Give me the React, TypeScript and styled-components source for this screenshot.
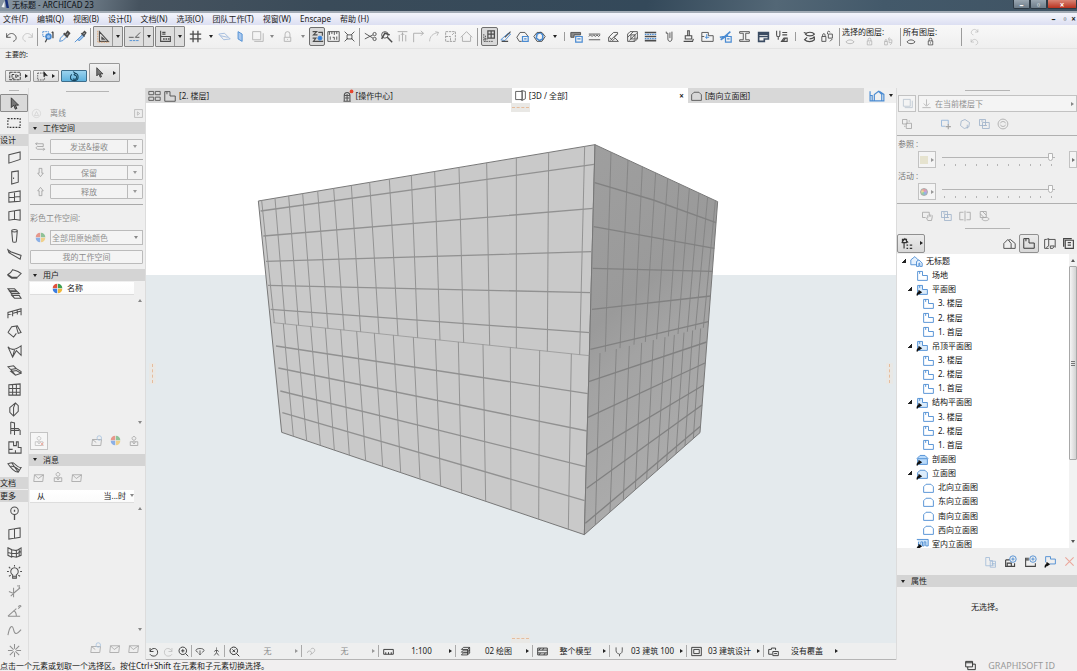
import React from "react";
import styled, { createGlobalStyle, css } from "styled-components";

const GlobalStyle = createGlobalStyle`
  *, *::before, *::after { box-sizing: border-box; }
  html, body { margin: 0; background: #efefef; }
  body, button, input, select {
    font-family: "Noto Sans", "Noto Sans CJK SC", sans-serif;
    font-size: 8px;
    line-height: 12px;
    color: #1c1c1c;
  }
  button { padding: 0; margin: 0; border: 0; background: none; }
  ul { list-style: none; margin: 0; padding: 0; }
`;

/* ---------- icons ---------- */

const B = "#4a8bd2";

const floor = <path d="M2 3h6v5h6v6H2z M4.500 3v3" />;
const house = <path d="M2 14V7l3-3h6l3 3v7z" />;
const linkMark = <path d="M1.500 15.500c0-3 1-4 3.500-4M3 9.500l3 2-3 2" stroke="#111" strokeWidth="1.800" />;
const disc = (
  <g strokeWidth="0">
    <path d="M7.500 7.500H1A6.500 6.500 0 0 1 7.500 1z" fill="#e0523c" />
    <path d="M8.500 7.500H15A6.500 6.500 0 0 0 8.500 1z" fill="#3f9e52" />
    <path d="M7.500 8.500H1A6.500 6.500 0 0 0 7.500 15z" fill="#3b7de0" />
    <path d="M8.500 8.500H15A6.500 6.500 0 0 1 8.500 15z" fill="#f0b73a" />
  </g>
);
const mail = <path d="M2 5h12l-1 9H1z M2 5l5 5 7-5" />;
const person = <path d="M8 2a2.500 2.500 0 1 1-.1 0z M3 14V9h10v5z M6 9l2 3 2-3" />;
const lock = <path d="M4 7h8v7H4z M5.500 7V4.500a2.500 2.500 0 0 1 5 0V7 M8 9.500v2" />;
const eye = <path d="M1.500 8c3-4.500 10-4.500 13 0-3 3.500-10 3.500-13 0z" />;

const icons: Record<string, React.ReactNode> = {
  undo: <path d="M2 4v5h5M2 9c2-5 7-6 10-3s2 7-2 8" />,
  redo: <path d="M14 4v5H9M14 9c-2-5-7-6-10-3s-2 7 2 8" />,
  find: <g><rect x="1" y="2" width="7" height="6" stroke={B} strokeDasharray="2 1" /><circle cx="8" cy="8" r="3" stroke={B} fill="#9cc4f0" strokeWidth="2" /><path d="M6 11l-2 4M13.500 2v8M12 3.500L13.500 2" strokeWidth="1.600" /></g>,
  dropper: <g><path d="M2 14l1-4 5-5 3 3-5 5z" stroke={B} /><path d="M7 4l5 5M9 6l3-4 2 2-3 4z" strokeWidth="2.200" /></g>,
  syringe: <g><path d="M1 15l4-4 6-6 2 2-6 6-3-1" stroke={B} fill="#9fc2e8" /><path d="M9 4l4 4M10 5l3-3 1.500 1.500L12 7" strokeWidth="1.800" /></g>,
  setsquare: <g><path d="M3 2v12h11z M6 9v2.500h3z" strokeWidth="1.300" /><path d="M1 1v14h14" stroke="#dc9b64" strokeDasharray="2 1" /></g>,
  snap: <g><path d="M1 9h6M9 9l6-6M9 9h5" /><path d="M2 13h12" stroke={B} strokeDasharray="3 1" /></g>,
  tracker: <g><path d="M2 1v13h12V8H2 M4 3h4M4 5h4" strokeWidth="1.400" /><path d="M5 11h2M8 11h2M11 11h2" strokeWidth="2" /></g>,
  grid: <path d="M5 1v14M11 1v14M1 5h14M1 11h14" strokeWidth="1.600" />,
  plane: <g stroke="#9db8dc"><path d="M1 5l7-1 7 7-8 1z M3 7l9 2" /></g>,
  planeV: <path d="M5 2l5 3v9l-5-3z" stroke={B} fill="#a9c8ee" />,
  frame: <path d="M2 2h10v10H2z M4 14h11V4" />,
  lock,
  lamp: <path d="M4 14V9h1V5a3 3 0 0 1 6 0v4h1v5z M5 9h6M8 11v1" />,
  trace: <g><path d="M2 2h5l-4 4h5M2 10h4l-3 4h12M9 3h5v4" strokeWidth="1.400" /><circle cx="11" cy="10" r="2.500" fill="#2d7de0" stroke={B} /></g>,
  ruler: <path d="M1 2h14v12H1z M3 2v4M6 2v3M9 2v4M12 2v3M4 8v4M7 9h2v3M12 8v4" />,
  explode: <path d="M2 2l4 4M14 2l-4 4M2 14l4-4M14 14l-4-4M5 6h6v5H5z" />,
  scissors: <g><path d="M1 4l10 6M1 11l10-5" /><circle cx="13" cy="11" r="2" /><circle cx="13" cy="5" r="2" /></g>,
  zoomPick: <g><circle cx="6" cy="6" r="4" /><path d="M9 9l6 6M2 11l4-7 6 2" strokeWidth="1.800" /></g>,
  adjust: <path d="M2 2h12M8 3v11M4 6v8M12 6v8M6 6l2-2 2 2" />,
  corner: <path d="M2 15V4h12M11 1l3 3-3 3" />,
  arcEdit: <path d="M2 14C2 8 6 4 13 3M9 2l4 1-2 4" />,
  resize: <path d="M2 2h12v12H2z M2 8h6v6M10 6l3-3" strokeDasharray="3 1" />,
  houseUp: <path d="M1 9l7-7 7 7M3 8v6h10V8" />,
  select3d: <g><path d="M6 1v9h8V1zM6 5h8M10 1v9" strokeWidth="1.500" /><path d="M1 5v9h12M3 7v7M1 11h5" strokeDasharray="2 1" /></g>,
  edge: <g><path d="M1 12l9-8 3 1-7 8z" stroke={B} /><path d="M6 9l7-7M2 14h8" strokeWidth="1.400" /></g>,
  shapeDoc: <g><path d="M7 14H4L1 9l4-6h6l4 5" /><path d="M8 8h7v6H8z M10 11h3" stroke={B} strokeWidth="1.500" /></g>,
  orbitCube: <g><path d="M5 5l4-2 3 3v5l-4 2-4-3z" stroke={B} strokeWidth="2" /><path d="M1 8l4-5h6M15 8l-4 6H5L1 8M11 3l4 5" /></g>,
  profile: <g><path d="M1 3h12v3H5v3H1z" fill="#8a8a8a" /><path d="M7 8h8v7H7z M9 11h4" stroke={B} strokeWidth="1.500" /></g>,
  waves: <path d="M1 5h14M1 12h14M1 8l2-2 2 2 2-2 2 2 2-2 2 2 2-2" />,
  hatchFloor: <path d="M2 14V9l6-6h5v2l-4 4 5 5z M4 13l8-8M7 13l3-3M3 9l4 4" />,
  hatchBox: <path d="M2 5l3-3h9v9l-3 3H2z M2 9l7-7M4 13l9-9M9 14l5-5M6 6h5v5H6z" />,
  composite: <g><path d="M1 3h14M1 13h14M1 8h14" strokeWidth="2" /><path d="M1 5.500h14M1 10.500h14" stroke={B} strokeWidth="1.500" strokeDasharray="2 1" /></g>,
  pen: <path d="M4 2v2h2v7c0 4 5 4 5 0V2M8.500 3v7" />,
  brush: <path d="M7 1h2v6H7z M4 7h8v4H4z M2 14h11l1-3" strokeWidth="1.300" />,
  zone: <g><path d="M1 3h8v4h6v7H1z M1 8h3" /><path d="M7 5v6M5 9h5" stroke={B} /></g>,
  changePen: <g><path d="M1 9l6-1 7-6M2 12l9-6" stroke={B} strokeWidth="2" /><path d="M8 8h7v7H8z M10 11h3" stroke={B} strokeWidth="1.500" /></g>,
  beamI: <path d="M2 2h12v2H9.500v8H14v2H2v-2h4.500V4H2z" />,
  schedule: <path d="M2 3h12v8H9v3H2z M2 5h12M2 8h12" strokeWidth="2" stroke="#3b4c63" />,
  penSet: <path d="M2 1v5c0 3 4 3 4 0V1M4 9v3M9 3h6M9 6h6M8 14l3-4h4v4z M10 14l3-4" strokeWidth="1.300" />,
  layers: <path d="M3 5c2-3 9-3 11 0-2 3-9 3-11 0zM1 3l3 1M2 12c3 3 9 3 12 0V8c-1 2-3 3-6 3M5 9L2 12l3 2" strokeWidth="1.400" />,
  locks: <path d="M1 8h5v6H1z M2 8V6c0-2 3-2 3 0v2M9 5h5v5H9z M8 5V3c0-2 3-2 3 0M11 14l3-3" />,
  eye,
  arrow: <path d="M4 1v12l3-3 2 5 2-1-2-4h4z" fill="#777" stroke="#333" />,
  marquee: <path d="M1 3h14v10H1z" strokeDasharray="2 1.400" strokeWidth="1.200" />,
  wall: <path d="M2 5l12-3v8L2 14z" />,
  door: <path d="M5 2l7-1v12l-7 2z M7 8v1.500" />,
  window: <path d="M2 4l12-2v11L2 14z M8 3v10.500M2 9l12-1" />,
  cwindow: <path d="M2 4l6-1v9l-6 1z M8 3l6-1v11l-6-1M8 12l6 1" />,
  column: <path d="M5 3c0-2 6-2 6 0l-1 11c0 1.500-4 1.500-4 0z M5 3c0 1.600 6 1.600 6 0" />,
  beam: <path d="M1 3l1 3 12 7 1-4L4 5 1 3z M2 6l2-1" />,
  slab: <path d="M1 9c2-1 4-3 5-5 3 1 5 1 9 4l-4 4H5z M1 9v1l4 3h6" />,
  stair: <path d="M1 3h7l2 2H3zM3 6h8l2 2H5zM5 10h8l2 3H8z M1 3l7 10" />,
  railing: <path d="M1 14V8l14-4v7M1 10.500l14-4M6 7v5M11 5v5" />,
  roof: <path d="M1 9l4-6 6-1 4 7-3 1-2-7M1 9l6 5 3-4" />,
  shell: <path d="M1 3c3 4 7 4 14-1v10l-5-5-4 7z M8 6l-2 8" />,
  skylight: <path d="M1 4l6-1 3 3-6 1zM4 9l6-1 5 3-6 2zM4 7l5 6M10 6l5 3v2" />,
  curtain: <path d="M2 3l12-1v12H2z M6 3v11M10 2v12M2 7h12M2 11h12" />,
  morph: <path d="M3 6l6-5 3 3v6l-5 5-4-4z M9 1L7 6v9" />,
  chair: <path d="M4 1v13M4 1l4 1v6M4 8h8l2 2v5M8 8v7M4 10h9" />,
  zoneTool: <path d="M2 2h5v4h3V2h2v6h3v6H2z M2 10h4M9 14v-3" />,
  mesh: <path d="M1 4c3-1 5-2 7 0s4 4 7 4l-3 5c-3 0-4-1-6-3S3 7 1 4z M5 3l7 10M3 7c3-1 6 0 10 4" />,
  detail: <g><circle cx="8" cy="5" r="4" /><path d="M8 9v6M8 4v2" strokeWidth="1.400" /></g>,
  panels: <path d="M2 4l6-1v10l-6 1z M8 3l6-1v10l-6 1" />,
  cgrid: <path d="M1 3l4 2v8l-4-2z M5 5l5 1 5-3v8l-5 2-5-1M10 5v8M1 8l4 1h6l4-2M13 4v8" />,
  bulb: <path d="M6 10.500a4 4 0 1 1 4 0V14H6zM6 12h4M8 0v1.500M2 2l1.500 1.500M14 2l-1.500 1.500M0 7h2M14 7h2M2 12l2-1M14 12l-2-1" />,
  dim: <path d="M2 8l5 2 7-6M7 4v10M4 13l6-6M11 2h1M13 1v4" />,
  angle: <path d="M1 13h13M1 13l9-8M7 7c2 1 3 3 3 6M12 3c1-2 3-2 3 0M12 5l3-3" />,
  spline: <path d="M1 13C3 2 6 2 7 7s3 6 8 0" />,
  burst: <path d="M8 1v5M8 10v5M1 8h5M10 8h5M3 3l4 4M13 3L9 7M3 13l4-4M13 13L9 9" />,
  disc,
  discFaded: <g opacity="0.55">{disc}</g>,
  exchange: <path d="M3 2L1 4l2 2M1 4h11v4h-8c-3 0-3 4 0 4h10M12 10l2 2-2 2" />,
  down: <path d="M6 2h4v7h2l-4 5-4-5h2z" />,
  up: <path d="M6 14h4V7h2L8 2 4 7h2z" />,
  circle: <path d="M8 2a6 6 0 1 1-.1 0z M5 11l3-6 3 6z" />,
  play: <path d="M1 1h14v14H1z M6 5l4 3-4 3z" />,
  person,
  personX: <g>{person}<path d="M10 10l4 4M14 10l-4 4" stroke="#eda79c" /></g>,
  mail,
  mailUp: <g><path d="M2 6h12l-1 8H1z M2 6l5 4" /><circle cx="11" cy="4" r="3" stroke="#a9c4e0" /></g>,
  tabs: <path d="M1 3h6v4H1zM9 3h6v4H9zM1 10h6v4H1zM9 10h6v4H9z" />,
  floor,
  centre: <g><path d="M3 15h9M4 15V8h7v7M4 8c0-5 7-5 7 0M7.500 6v9M5 11h5" strokeWidth="1.300" /><circle cx="13" cy="3" r="2.300" fill="#e8452c" strokeWidth="0" /></g>,
  view3d: <path d="M2 3h8v10H2z M10 2l4 1v9l-4 2z M10 2L8 3M10 14l-2-1" />,
  house,
  city: <path d="M1 4v9h4M1 8h2v5M5 13V7l4-3 3 3v6zM12 7l-1-2 3 2v6h-2" />,
  down2: <path d="M8 2v9M4 8l4 4 4-4M2 14h12" />,
  link: <path d="M2 2h6v6H2z M7 7h7v7H7z M4 11h2M10 4h2" />,
  addSq: <g><path d="M2 3h9v6M2 3v8h5" stroke="#8fb1d8" /><path d="M11 8v7M7.500 11.500h7" strokeWidth="1.500" /></g>,
  addHex: <path d="M3 4l5-2 6 4-1 6-6 2-5-4z M11 9v5" />,
  swap: <path d="M2 2h8v8H2z M6 6h9v8H6z M4 4h3M8 10h4" />,
  cycle: <path d="M8 1.500a6.500 6.500 0 1 1-.1 0z M4.500 7c1-3 6-3 7 0M11.500 9c-1 3-6 3-7 0" />,
  hand: <path d="M2 3h9v4M2 3v7h4M7 10l2 4h5l1-5V7M9 11V7M11 9V6M13 9V6" />,
  mirror: <path d="M8 1v14M6 3H1v10h5M10 3h5v10h-5" />,
  stamp: <path d="M3 2h8v8H3z M5 12c2-3 8-3 10 0-2 3-8 3-10 0M3 5l5 5M6 2l5 5" />,
  project: <path d="M3 3h5v4H3z M2 7l4-5 4 5M5 7v7M8 10h2M8 14h2M12 10h3M12 14h3" strokeWidth="1.400" />,
  homes: <path d="M1 14V8l5-5 4 5v6zM7 4l2-1 6 5v6h-5" />,
  sheets: <path d="M4 3H2v11h5M4 3l3-1v9l-3 2M7 3h8v10M9 11h5l-2 3H9z" />,
  book: <path d="M4 4h10v10H4zM2 12V2h10M7 7h4M7 10h4" strokeWidth="1.400" />,
  homesBlue: <g fill="#e6f1fd"><path d="M1 12V6l5-4 4 4v6z" /><path d="M8 14V8l3-2 4 4v4h-3v-4h-1v4z" /></g>,
  floorLink: <g><g fill="#dcecfb">{floor}</g>{linkMark}</g>,
  houseLink: <g><g fill="#dcecfb">{house}</g>{linkMark}</g>,
  section: <g><path d="M1 7l4-4h6l4 4M2 7h12v7H2z" fill="#b9dafa" />{linkMark}</g>,
  interior: <g><path d="M1 3h14v8h-3V6h-2v5H8V6H6v5H3V6" fill="#cfe5fa" />{linkMark}</g>,
  copyDoc: <path d="M1 2h5v4h4v7H1z M7 7h7v8H7z M9 10h4M9 12h4" />,
  addView: <g><path d="M2 6h5M2 6v8h11v-4M4 14v-4h5v4" strokeWidth="1.400" /><circle cx="11" cy="5" r="4" stroke={B} /><path d="M11 3v4M9 5h4" stroke={B} /></g>,
  addFolder: <g><path d="M6 4H2v10h12v-4M2 6h4" strokeWidth="1.300" /><circle cx="11" cy="5" r="4" stroke={B} /><path d="M11 3v4M9 5h4" stroke={B} /></g>,
  openView: <g><path d="M2 9V2h6v3h6v6H7" stroke={B} />{linkMark}</g>,
  cross: <path d="M2 2l12 12M14 2L2 14" strokeWidth="1.600" />,
  zoomBack: <path d="M3 3v5h5M3 8c2-6 11-6 11 1s-9 7-11 3" strokeWidth="1.300" />,
  zoomNext: <path d="M13 3v5H8M13 8C11 2 2 2 2 9s9 7 11 3" />,
  zoomIn: <path d="M7 1.500a5.500 5.500 0 1 1-.1 0z M11 11l4 4M4.500 7h5M7 4.500v5" strokeWidth="1.300" />,
  orbit: <path d="M5 10C0 9 0 4 8 4s8 5 3 6M8 7v7M6 12l2 2 2-2" strokeWidth="1.300" />,
  walk: <path d="M8 1v2M8 5v5l-4 5M8 10l4 5M4 8l4-3 4 3" strokeWidth="1.500" />,
  zoomFit: <path d="M7 1.500a5.500 5.500 0 1 1-.1 0z M11 11l4 4M5 5l4 4M9 5L5 9" strokeWidth="1.400" />,
  slope: <path d="M2 10a3 3 0 1 1 4 3M7 5a3 3 0 1 1 4 4L8 12" />,
  scaleBar: <path d="M1 5h14v7H1z M4 9v3M8 9v3M12 9v3" strokeWidth="1.300" />,
  layerSet: <path d="M5 2h9l-3 3H2zM5 6h9l-3 3H2zM5 10h9l-3 3H2zM11 5v8M14 2v8" strokeWidth="1.200" />,
  structure: <path d="M1 3h14v10H1z M1 6h14M1 10h14M5 3l-2 3M10 3L8 6M5 10l-2 3M12 10l-2 3" strokeWidth="1.300" />,
  pens: <path d="M3 2v5c0 4 4 4 5 5 1-1 4-1 4-5V2M8 12v3" />,
  modelView: <path d="M1 2h14v12H1z M4 5h8v6H4z" strokeWidth="1.300" />,
  override: <path d="M1 5h4V3h6v3M1 5v7h5M7 8h8v6H7zM9 11h4" strokeWidth="1.300" />,
  windows: <path d="M1 2h10v8H1z M1 4h10M4 10v4h11V6h-4" strokeWidth="1.400" />,
  viewBox: <path d="M1 3h14v10H1z M4 6h3M4 6v5h3M9 10V6l4 2-4 2" strokeWidth="1.200" strokeDasharray="4 1" />,
  marqueeArrow: <g><path d="M1 3h10v10H1z" strokeDasharray="2 1.500" /><path d="M10 1v7l2-2 3 1z" fill="#222" /></g>,
  rotate: <path d="M6 1l3 2-2 3M8 3c7 1 7 11 0 11s-7-6-4-9M8 6a3 3 0 1 1-2 5" stroke="#17465f" strokeWidth="1.500" />,
};

const Svg = styled.svg<{ $size: number }>`
  width: ${(p) => p.$size}px;
  height: ${(p) => p.$size}px;
  flex: none;
  display: block;
`;

const Icon = ({ name, size = 12, color = "#555" }: { name: string; size?: number; color?: string }) => (
  <Svg $size={size} viewBox="0 0 16 16" fill="none" stroke={color} strokeWidth="1.1" aria-hidden="true">
    {icons[name]}
  </Svg>
);

const Caret = styled.span<{ $dir?: "down" | "right" | "up"; $color?: string }>`
  width: 0;
  height: 0;
  flex: none;
  border: 2px solid transparent;
  ${(p) => {
    const c = p.$color ?? "#222";
    if (p.$dir === "right") return css`border-left: 3px solid ${c}; border-right-width: 0;`;
    if (p.$dir === "up") return css`border-bottom: 3px solid ${c}; border-top-width: 0;`;
    return css`border-top: 3px solid ${c}; border-bottom-width: 0;`;
  }}
`;

/* ---------- shell ---------- */

const Shell = styled.div`
  min-height: 100vh;
  display: flex;
  flex-direction: column;
  background: #efefef;
  overflow: hidden;
`;

const TitleBar = styled.header`
  display: flex;
  align-items: flex-start;
  height: 13px;
  padding-left: 1px;
  background: linear-gradient(100deg, #8795a2 0%, #75838f 7%, #46535f 13%, #3a4b59 30%, #34495a 60%, #536776 72%, #43596a 82%, #3f5363 100%);
  border-bottom: 2px solid #a3acb6;
`;

const AppName = styled.h1`
  flex: 1;
  margin: 0 0 0 3px;
  font-size: 8px;
  font-weight: 400;
  line-height: 10px;
  color: #0b0f14;
`;

const WinButton = styled.button<{ $close?: boolean }>`
  width: ${(p) => (p.$close ? 30 : 17)}px;
  height: 9px;
  color: #fff;
  font-size: 8px;
  font-weight: 700;
  line-height: 7px;
  border: 1px solid #2d3944;
  border-top: 0;
  border-radius: 0 0 2px 2px;
  background: ${(p) => (p.$close ? "linear-gradient(#d98575, #b93320)" : "linear-gradient(#9aa7b2, #6d7c89)")};
`;

const MenuBar = styled.nav`
  display: flex;
  align-items: center;
  height: 12px;
  padding-left: 3px;
  gap: 9px;
  background: linear-gradient(#f4f5fc, #dcdff2);
  button { line-height: 10px; white-space: nowrap; }
`;

const MdiButtons = styled.div`
  margin-left: auto;
  display: flex;
  gap: 5px;
  padding-right: 1px;
  button { font-weight: 700; width: 5px; line-height: 10px; }
`;

const ToolBar = styled.div`
  display: flex;
  align-items: center;
  height: 24px;
  padding-left: 3px;
  background: linear-gradient(#f8f8f8, #efefef);
  border-bottom: 1px solid #e3e3e3;
`;

const ToolButton = styled.button<{ $active?: boolean; $w?: number }>`
  flex: none;
  display: flex;
  align-items: center;
  justify-content: center;
  width: ${(p) => p.$w ?? 16}px;
  height: 19px;
  ${(p) =>
    p.$active &&
    css`
      border: 1px solid #6f6f6f;
      border-radius: 2px;
      background: #d9d9d9;
    `}
`;

const SplitTool = styled.div`
  display: flex;
  width: 30px;
  margin-right: 1px;
  border: 1px solid #858585;
  border-radius: 1px;
  background: #dedede;
  button + button { border-left: 1px solid #9a9a9a; }
`;

const Rule = styled.span<{ $gap?: number; $h?: number }>`
  flex: none;
  width: 1px;
  height: ${(p) => p.$h ?? 18}px;
  margin: 0 ${(p) => p.$gap ?? 3}px;
  background: #9b9b9b;
`;

const ElementTools = styled.div`
  display: flex;
  justify-content: space-between;
  width: 222px;
`;

const LayerBox = styled.div<{ $w: number }>`
  width: ${(p) => p.$w}px;
  padding-left: 1px;
  line-height: 10px;
  white-space: nowrap;
`;

const LayerIcons = styled.div`
  display: flex;
  gap: 10px;
  padding-left: 3px;
`;

const LayerHistory = styled.div`
  display: flex;
  flex-direction: column;
  gap: 1px;
  padding-left: 7px;
`;

const InfoBox = styled.div`
  height: 39px;
  padding: 0 5px;
  background: #efefef;
`;

const InfoLabel = styled.div`
  font-size: 7px;
  line-height: 11px;
`;

const InfoButtons = styled.div`
  display: flex;
  align-items: flex-end;
  gap: 2px;
  height: 22px;
`;

const InfoButton = styled.button<{ $blue?: boolean; $tall?: boolean }>`
  display: flex;
  align-items: center;
  justify-content: center;
  gap: ${(p) => (p.$tall ? 8 : 4)}px;
  width: ${(p) => (p.$tall ? 31 : 26)}px;
  height: ${(p) => (p.$tall ? 19 : 12)}px;
  border: 1px solid ${(p) => (p.$blue ? "#3d6e8c" : "#999")};
  border-radius: 1px;
  background: ${(p) => (p.$blue ? "linear-gradient(#9bd3ef, #5fb2dd)" : "linear-gradient(#f2f2f2, #dcdcdc)")};
`;

const Body = styled.div`
  flex: 1;
  display: grid;
  grid-template-columns: 29px 117px minmax(0, 1fr) 181px;
`;

/* ---------- toolbox ---------- */

const Toolbox = styled.aside`
  display: flex;
  flex-direction: column;
  padding-top: 2px;
  border-right: 1px solid #dedede;
`;

const Grip = styled.span<{ $w?: number }>`
  display: block;
  width: ${(p) => p.$w ?? 10}px;
  height: 1px;
  margin: 0 auto;
  background: #b5b5b5;
`;

const ToolHeader = styled.h2`
  margin: 0 0 1px;
  font-size: 8px;
  font-weight: 400;
  height: 12px;
  line-height: 11px;
  background: #d6d6d6;
`;

const ToolGrid = styled.div<{ $h?: number }>`
  display: grid;
  grid-auto-rows: minmax(0, 1fr);
  justify-items: center;
  margin-top: 1px;
  ${(p) => (p.$h ? css`height: ${p.$h}px;` : css`flex: 1 1 0;`)}
  button { display: flex; align-items: center; justify-content: center; width: 28px; }
`;

const PickTool = styled.button`
  display: flex;
  align-items: center;
  justify-content: center;
  width: 28px;
  height: 18px;
  margin-top: 3px;
  border: 1px solid #8b8b8b;
  border-radius: 1px;
  background: #dadada;
`;

const MarqueeTool = styled.button`
  display: flex;
  align-items: center;
  justify-content: center;
  width: 28px;
  height: 22px;
`;

/* ---------- left panel ---------- */

const Panel = styled.aside`
  display: flex;
  flex-direction: column;
  padding-top: 3px;
  color: #8b8b8b;
  border-right: 1px solid #dcdcdc;
`;

const PanelHeader = styled.h2`
  display: flex;
  align-items: center;
  gap: 6px;
  height: 12px;
  margin: 0;
  padding-left: 4px;
  font-size: 8px;
  font-weight: 400;
  line-height: 12px;
  color: #222;
  background: #d4d4d4;
`;

const StatusLine = styled.div`
  display: flex;
  align-items: center;
  height: 30px;
  padding: 12px 2px 0 2px;
  gap: 8px;
  span { flex: 1; }
`;

const Field = styled.div<{ $mt?: number }>`
  display: flex;
  align-items: center;
  height: 15px;
  margin: ${(p) => p.$mt ?? 4}px 2px 0 6px;
  gap: 4px;
`;

const SplitButton = styled.div`
  flex: 1;
  display: flex;
  height: 15px;
  border: 1px solid #bbb;
  border-radius: 1px;
  background: #f3f3f3;
  button { color: #8b8b8b; line-height: 12px; }
  button:first-child { flex: 1; }
  button:last-child {
    display: flex;
    align-items: center;
    justify-content: center;
    width: 15px;
    border-left: 1px solid #bbb;
  }
`;

const Divider = styled.hr`
  width: calc(100% - 3px);
  height: 1px;
  margin: 5px 1px 0;
  border: 0;
  background: #a9a9a9;
`;

const FieldLabel = styled.label`
  display: block;
  margin: 7px 0 0 1px;
  line-height: 12px;
`;

const SelectWrap = styled.div`
  flex: 1;
  display: flex;
  align-items: center;
  height: 15px;
  padding-right: 4px;
  border: 1px solid #bbb;
  background: #f4f4f4;
  select {
    flex: 1;
    min-width: 0;
    height: 13px;
    padding: 0 0 0 1px;
    border: 0;
    appearance: none;
    background: none;
    color: #929292;
    font-size: 8px;
  }
`;

const WideButton = styled.button`
  height: 14px;
  margin: 5px 2px 5px 1px;
  line-height: 12px;
  color: #8b8b8b;
  border: 1px solid #bbb;
  border-radius: 1px;
  background: #f4f4f4;
`;

const ListHead = styled.div<{ $pad: number }>`
  display: flex;
  align-items: center;
  gap: 4px;
  height: 13px;
  margin: 1px 11px 0 1px;
  padding-left: ${(p) => p.$pad}px;
  color: #222;
  background: linear-gradient(#fff, #fbfbfb);
  border-bottom: 1px solid #ddd;
`;

const ListArea = styled.div`
  flex: 1 1 0;
  display: flex;
  flex-direction: column;
  align-items: flex-end;
  justify-content: space-between;
  padding: 4px 3px 4px 0;
`;

const IconRow = styled.div<{ $h: number; $end?: number }>`
  display: flex;
  align-items: center;
  justify-content: flex-end;
  gap: 7px;
  height: ${(p) => p.$h}px;
  padding: 0 ${(p) => p.$end ?? 5}px 0 1px;
`;

const Boxed = styled.button`
  display: flex;
  align-items: center;
  justify-content: center;
  width: 18px;
  height: 18px;
  margin-right: auto;
  border: 1px solid #c4c4c4;
  background: #f6f6f6;
`;

const MessageTools = styled.div`
  display: flex;
  align-items: center;
  gap: 7px;
  height: 23px;
  padding-left: 4px;
`;

const MessageCol = styled.span`
  flex: 1;
`;

/* ---------- centre ---------- */

const Centre = styled.main`
  display: flex;
  flex-direction: column;
  min-width: 0;
`;

const TabBar = styled.div`
  display: flex;
  height: 15px;
  background: #f0f0f0;
`;

const Tab = styled.button<{ $active?: boolean; $grow: number }>`
  flex: ${(p) => p.$grow} 1 0;
  display: flex;
  align-items: center;
  gap: 2px;
  padding: 0 4px 0 2px;
  line-height: 14px;
  background: ${(p) => (p.$active ? "#fff" : "#d8d8d8")};
  b { margin-left: auto; font-size: 8px; }
`;

const TabMenu = styled.button`
  display: flex;
  align-items: center;
  justify-content: space-between;
  width: 32px;
  padding: 0 3px 0 5px;
`;

const Viewport = styled.section`
  position: relative;
  flex: 1 1 0;
  min-height: 0;
  background: linear-gradient(#fff 0 172px, #e4eaed 172px);
`;

const Scene = styled.svg`
  position: absolute;
  inset: 0;
  width: 100%;
  height: 100%;
`;

const EdgeGrip = styled.span<{ $side: "top" | "bottom" | "left" | "right" }>`
  position: absolute;
  background: #e9e8e5;
  ${(p) =>
    p.$side === "top" || p.$side === "bottom"
      ? css`
          ${p.$side}: 0;
          left: calc(50% - 10px);
          width: 19px;
          height: 9px;
          &::after { content: ""; position: absolute; left: 1px; right: 1px; top: 4px; border-top: 1px dashed #e6bc9c; }
        `
      : css`
          ${p.$side}: 3px;
          top: calc(50% - 10px);
          width: 7px;
          height: 21px;
          &::after { content: ""; position: absolute; top: 1px; bottom: 1px; left: 3px; border-left: 1px dashed #e6bc9c; }
        `}
`;

const QuickBar = styled.div`
  display: flex;
  align-items: center;
  height: 17px;
  background: #eeefef;
  border-bottom: 1px solid #b5b5b5;
`;

const QuickTools = styled.div<{ $w: number }>`
  display: flex;
  align-items: center;
  justify-content: space-around;
  width: ${(p) => p.$w}px;
  height: 12px;
  border-right: 1px solid #aaa;
`;

const QuickOption = styled.button<{ $dim?: boolean }>`
  display: flex;
  align-items: center;
  width: 77px;
  height: 12px;
  padding: 0 3px 0 4px;
  white-space: nowrap;
  line-height: 12px;
  color: ${(p) => (p.$dim ? "#8a8a8a" : "#1c1c1c")};
  border-right: 1px solid #aaa;
  &:last-child { border-right: 0; }
  em { flex: 1; font-style: normal; text-align: center; }
`;

/* ---------- right panel ---------- */

const RightPanel = styled.aside`
  display: flex;
  flex-direction: column;
  padding-top: 2px;
  border-left: 1px solid #dcdcdc;
`;

const RefRow = styled.div`
  display: flex;
  gap: 2px;
  height: 17px;
  margin-top: 4px;
  padding-left: 1px;
`;

const RefButton = styled.button<{ $w?: number }>`
  display: flex;
  align-items: center;
  gap: 3px;
  height: 17px;
  color: #909090;
  border: 1px solid #c2c2c2;
  background: #f4f4f4;
  ${(p) =>
    p.$w
      ? css`flex: none; width: ${p.$w}px; justify-content: center;`
      : css`flex: 1; padding: 0 2px;`}
  em { flex: 1; text-align: left; font-style: normal; }
`;

const RefTools = styled.div<{ $pad: number; $h: number }>`
  display: flex;
  align-items: center;
  gap: 7px;
  height: ${(p) => p.$h}px;
  padding-left: ${(p) => p.$pad}px;
  button:first-child { margin-right: ${(p) => (p.$pad < 10 ? 20 : 0)}px; }
`;

const RefLine = styled.hr`
  width: 100%;
  height: 1px;
  margin: 0;
  border: 0;
  background: #b0b0b0;
`;

const SliderLabel = styled.label`
  display: block;
  padding: 2px 0 0 1px;
  height: 15px;
  line-height: 12px;
  color: #777;
`;

const SliderRow = styled.div`
  display: flex;
  align-items: center;
  height: 17px;
  padding-left: 21px;
`;

const SliderBox = styled.div`
  flex: 1;
  height: 17px;
  margin: 0 14px 0 6px;
`;

const Slider = styled.input`
  display: block;
  width: 100%;
  height: 12px;
  margin: 0;
  appearance: none;
  background: linear-gradient(#b5b5b5, #b5b5b5) 0 6px / 100% 1px no-repeat;
  &::-webkit-slider-thumb {
    appearance: none;
    width: 5px;
    height: 8px;
    border: 1px solid #b5b5b5;
    border-radius: 0 0 3px 3px;
    background: #fafafa;
  }
`;

const Ticks = styled.div`
  display: flex;
  justify-content: space-between;
  padding: 1px 3px 0 2px;
  span { width: 1px; height: 2px; background: #b5b5b5; }
`;

const Swatch = styled.span<{ $round?: boolean }>`
  flex: none;
  width: 8px;
  height: 8px;
  ${(p) =>
    p.$round
      ? css`border-radius: 50%; background: conic-gradient(#ef9a9a, #c8a0d8, #8fb4e8, #8fcfa5, #e8dc9a, #ef9a9a); border: 1px solid #aaa;`
      : css`background: #e6e3cf;`}
`;

const SideSlot = styled.div`
  width: 8px;
`;

const Spacer = styled.div`
  height: 3px;
`;

const NavRow = styled.div`
  display: flex;
  align-items: center;
  justify-content: flex-end;
  gap: 1px;
  height: 20px;
  margin-top: 4px;
`;

const NavButton = styled.button<{ $active?: boolean; $wide?: boolean }>`
  display: flex;
  align-items: center;
  justify-content: center;
  gap: 7px;
  height: 19px;
  width: ${(p) => (p.$wide ? 28 : p.$active ? 20 : 18)}px;
  ${(p) => p.$wide && css`margin-right: auto;`}
  ${(p) =>
    (p.$wide || p.$active) &&
    css`
      border: 1px solid #909090;
      border-radius: 2px;
      background: linear-gradient(#ececec, #d8d8d8);
    `}
`;

const TreeBox = styled.div`
  display: flex;
  height: 294px;
  margin-top: 1px;
  overflow: hidden;
  background: #fff;
`;

const Tree = styled.ul`
  flex: 1;
  height: 297px;
  display: grid;
  grid-auto-rows: 1fr;
`;

const TreeItem = styled.li<{ $level: number }>`
  display: flex;
  align-items: center;
  gap: 3px;
  padding-left: ${(p) => 5 + p.$level * 6}px;
  line-height: 14px;
  white-space: nowrap;
  color: #111;
`;

const Twist = styled.span<{ $show?: boolean }>`
  width: 4px;
  height: 4px;
  margin-right: 1px;
  background: ${(p) => (p.$show ? "linear-gradient(135deg, transparent 50%, #222 50%)" : "none")};
`;

const ScrollTrack = styled.div`
  display: flex;
  flex-direction: column;
  align-items: center;
  width: 8px;
  padding: 5px 0;
  background: #f2f2f2;
`;

const ScrollThumb = styled.div`
  display: flex;
  align-items: center;
  justify-content: center;
  width: 8px;
  height: 194px;
  margin: 4px 0 auto;
  border: 1px solid #a8a8a8;
  border-radius: 1px;
  background: linear-gradient(90deg, #f5f5f5, #d2d2d2);
  &::after { content: ""; width: 4px; height: 5px; background: repeating-linear-gradient(#777 0 1px, transparent 1px 2px); }
`;

const Empty = styled.p`
  margin: 14px 0 0;
  text-align: center;
`;

const StatusBar = styled.footer`
  display: flex;
  align-items: center;
  height: 11px;
  padding-right: 22px;
  background: #f1eff0;
  line-height: 11px;
  white-space: nowrap;
  span { flex: 1; }
`;

const Account = styled.button`
  display: flex;
  align-items: center;
  gap: 12px;
  font-size: 9px;
  line-height: 11px;
  color: #9a9a9a;
`;

/* ---------- building drawing ---------- */

type P = [number, number];
const at = (a: P, b: P, x: number) => a[1] + ((b[1] - a[1]) * (x - a[0])) / (b[0] - a[0]);
const seams = (tops: number[], bottoms: number[], t: [P, P], b: [P, P]) =>
  tops.map((x, i) => `M${x} ${at(t[0], t[1], x)}L${bottoms[i]} ${at(b[0], b[1], bottoms[i])}`).join("");

const leftTop: [P, P] = [[55, 213], [1065, 44]];
const leftMid: [P, P] = [[100, 578], [1048, 677]];
const leftLow: [P, P] = [[125, 907], [1033, 1214]];
const rightTop: [P, P] = [[1065, 44], [1433, 215]];
const rightMid: [P, P] = [[1048, 677], [1404, 590]];
const rightLow: [P, P] = [[1033, 1214], [1380, 908]];

const leftUpper = seams(
  [65, 105, 146, 188, 233, 281, 334, 389, 448, 514, 584, 657, 740, 829, 926, 1034],
  [103, 136, 176, 218, 264, 312, 362, 417, 474, 533, 600, 671, 749, 829, 922, 1019], leftTop, leftMid);
const leftLower = seams(
  [130, 169, 212, 256, 302, 350, 403, 460, 520, 586, 655, 729, 811, 899, 994],
  [160, 200, 241, 283, 328, 377, 428, 482, 540, 602, 665, 737, 813, 896, 985], leftMid, leftLow);
const rightUpper = seams(
  [1113, 1164, 1207, 1247, 1283, 1317, 1348, 1377, 1403, 1426],
  [1096, 1140, 1182, 1216, 1250, 1285, 1314, 1342, 1366, 1390], rightTop, rightMid);
const rightLower = seams(
  [1080, 1129, 1168, 1205, 1240, 1275, 1303, 1332, 1358, 1382],
  [1066, 1110, 1150, 1186, 1220, 1252, 1280, 1308, 1335, 1360], rightMid, rightLow);

const Building = () => (
  <Scene viewBox="146 103 750 540" preserveAspectRatio="xMidYMin meet" role="img" aria-label="3D">
    <defs>
      <linearGradient id="shade" x1="0" y1="0" x2="0.3" y2="1">
        <stop offset="0" stopColor="#9f9f9f" />
        <stop offset="0.45" stopColor="#9a9a9a" />
        <stop offset="0.6" stopColor="#a3a3a3" />
        <stop offset="1" stopColor="#adadad" />
      </linearGradient>
    </defs>
    <g transform="translate(240 130) scale(0.33333)" fill="none">
      <path d="M55 213L1065 44L1048 677L1033 1214L125 907z" fill="#c9c9c9" stroke="#777" strokeWidth="3" />
      <path d="M1065 44L1433 215L1380 908L1033 1214L1048 677z" fill="url(#shade)" stroke="#777" strokeWidth="3" />
      <path d={leftUpper + leftLower} stroke="#939393" strokeWidth="3" />
      <path
        d="M62 243L1062 103M70 318L1060 235M78 394L1056 365M84 466L1053 488M92 538L1050 608M108 648L1044 791M115 714L1042 903M121 783L1037 1010M127 848L1034 1112"
        stroke="#919191" strokeWidth="4"
      />
      <path d="M100 578L1048 677" stroke="#8c8c8c" strokeWidth="2" />
      <path d={rightUpper + rightLower} stroke="#868686" strokeWidth="3" />
      <path
        d="M1064 158L1240 210L1428 278M1061 290L1423 355M1058 415L1418 424M1056 538L1412 498M1051 658L1405 575M1046 755L1400 636M1044 862L1395 699M1041 973L1391 765M1040 1075L1386 825M1036 1180L1382 888"
        stroke="#818181" strokeWidth="4"
      />
    </g>
  </Scene>
);

/* ---------- data ---------- */

const menus = ["文件(F)", "编辑(Q)", "视图(B)", "设计(I)", "文档(N)", "选项(O)", "团队工作(T)", "视窗(W)", "Enscape", "帮助 (H)"];

const designTools = ["wall", "door", "window", "cwindow", "column", "beam", "slab", "stair", "railing", "roof", "shell", "skylight", "curtain", "morph", "chair", "zoneTool", "mesh"];
const moreTools = ["detail", "panels", "cgrid", "bulb", "dim", "angle", "spline", "burst"];
const elementTools = ["profile", "waves", "hatchFloor", "hatchBox", "composite", "pen", "brush", "zone", "changePen", "beamI", "schedule", "penSet"];

const tree: { level: number; icon: string; text: string; open?: boolean }[] = [
  { level: 0, icon: "homesBlue", text: "无标题", open: true },
  { level: 1, icon: "floor", text: "场地" },
  { level: 1, icon: "floorLink", text: "平面图", open: true },
  { level: 2, icon: "floor", text: "3. 楼层" },
  { level: 2, icon: "floor", text: "2. 楼层" },
  { level: 2, icon: "floor", text: "1. 首层" },
  { level: 1, icon: "floorLink", text: "吊顶平面图", open: true },
  { level: 2, icon: "floor", text: "3. 楼层" },
  { level: 2, icon: "floor", text: "2. 楼层" },
  { level: 2, icon: "floor", text: "1. 首层" },
  { level: 1, icon: "floorLink", text: "结构平面图", open: true },
  { level: 2, icon: "floor", text: "3. 楼层" },
  { level: 2, icon: "floor", text: "2. 楼层" },
  { level: 2, icon: "floor", text: "1. 首层" },
  { level: 1, icon: "section", text: "剖面图" },
  { level: 1, icon: "houseLink", text: "立面图", open: true },
  { level: 2, icon: "house", text: "北向立面图" },
  { level: 2, icon: "house", text: "东向立面图" },
  { level: 2, icon: "house", text: "南向立面图" },
  { level: 2, icon: "house", text: "西向立面图" },
  { level: 1, icon: "interior", text: "室内立面图" },
];

const quick: { icon: string; text: string; dim?: boolean }[] = [
  { icon: "zoomFit", text: "无", dim: true },
  { icon: "slope", text: "无", dim: true },
  { icon: "scaleBar", text: "1:100" },
  { icon: "layerSet", text: "02 绘图" },
  { icon: "structure", text: "整个模型" },
  { icon: "pens", text: "03 建筑 100" },
  { icon: "modelView", text: "03 建筑设计" },
  { icon: "override", text: "没有覆盖" },
];

/* ---------- small parts ---------- */

const Tool = ({ name, color = "#4c4c4c", w, active, size = 13 }: { name: string; color?: string; w?: number; active?: boolean; size?: number }) => (
  <ToolButton aria-label={name} $w={w} $active={active}>
    <Icon name={name} size={size} color={color} />
  </ToolButton>
);

const Drop = ({ color }: { color?: string }) => (
  <ToolButton $w={13} aria-label="more"><Caret $color={color} /></ToolButton>
);

const Split = ({ name }: { name: string }) => (
  <SplitTool>
    <Tool name={name} w={18} />
    <ToolButton $w={10} aria-label="more"><Caret /></ToolButton>
  </SplitTool>
);

const PanelIcon = ({ name, color = "#a5a5a5", size = 12 }: { name: string; color?: string; size?: number }) => (
  <button aria-label={name}><Icon name={name} size={size} color={color} /></button>
);

const SplitField = ({ icon, text, mt }: { icon: string; text: string; mt: number }) => (
  <Field $mt={mt}>
    <Icon name={icon} size={11} color="#999" />
    <SplitButton>
      <button>{text}</button>
      <button aria-label="more"><Caret $color="#999" /></button>
    </SplitButton>
  </Field>
);

const SliderLine = ({ id, label, round }: { id: string; label: string; round?: boolean }) => (
  <>
    <SliderLabel htmlFor={id}>{label}</SliderLabel>
    <SliderRow>
      <RefButton $w={18} aria-label={label}>
        <Swatch $round={round} />
        <Caret $dir="right" $color="#999" />
      </RefButton>
      <SliderBox>
        <Slider id={id} type="range" min={0} max={100} defaultValue={98} />
        <Ticks>{Array.from({ length: 11 }, (_, i) => <span key={i} />)}</Ticks>
      </SliderBox>
      <SideSlot>
        {!round && <RefButton $w={8} aria-label="more"><Caret $dir="right" $color="#777" /></RefButton>}
      </SideSlot>
    </SliderRow>
  </>
);

export default function App() {
  return (
    <Shell>
      <GlobalStyle />
      <TitleBar>
        <Svg $size={8} viewBox="0 0 16 16" aria-hidden="true">
          <path d="M8 0h5l3 16h-5z" fill="#16307a" />
          <path d="M7 2L1 14l6 1z" fill="#f3f6fa" />
        </Svg>
        <AppName>无标题 - ARCHICAD 23</AppName>
        <WinButton aria-label="minimize">–</WinButton>
        <WinButton aria-label="restore">▫</WinButton>
        <WinButton $close aria-label="close">×</WinButton>
      </TitleBar>
      <MenuBar>
        {menus.map((m) => <button key={m}>{m}</button>)}
        <MdiButtons>
          <button>–</button>
          <button>▫</button>
          <button>×</button>
        </MdiButtons>
      </MenuBar>

      <ToolBar>
        <Tool name="undo" />
        <Tool name="redo" color="#c3c3c3" />
        <Rule $gap={2} />
        <Tool name="find" />
        <Tool name="dropper" />
        <Tool name="syringe" />
        <Rule $gap={2} />
        <Split name="setsquare" />
        <Split name="snap" />
        <Split name="tracker" />
        <Tool name="grid" w={18} />
        <Drop />
        <Tool name="plane" w={14} />
        <Tool name="planeV" w={18} />
        <Tool name="frame" color="#b3b3b3" />
        <Drop color="#888" />
        <Tool name="lamp" color="#b3b3b3" w={18} />
        <Drop color="#888" />
        <Tool name="trace" active />
        <Tool name="ruler" />
        <Tool name="explode" />
        <Rule $gap={2} />
        <Tool name="scissors" />
        <Tool name="zoomPick" />
        <Tool name="adjust" color="#aaa" />
        <Tool name="corner" color="#aaa" />
        <Tool name="arcEdit" color="#bbb" />
        <Tool name="resize" color="#999" />
        <Tool name="houseUp" color="#aaa" />
        <Rule $gap={3} />
        <Tool name="select3d" active w={17} />
        <Tool name="edge" />
        <Tool name="shapeDoc" w={17} />
        <Tool name="orbitCube" w={17} />
        <Drop />
        <Rule $gap={3} $h={9} />
        <ElementTools>
          {elementTools.map((t) => <Tool key={t} name={t} />)}
        </ElementTools>
        <Rule $gap={5} $h={9} />
        <Tool name="layers" />
        <Tool name="locks" w={21} />
        <Rule $gap={1} />
        <LayerBox $w={58}>
          选择的图层:
          <LayerIcons>
            <PanelIcon name="eye" size={10} />
            <PanelIcon name="lock" size={9} />
            <PanelIcon name="locks" size={9} />
          </LayerIcons>
        </LayerBox>
        <Rule $gap={1} />
        <LayerBox $w={58}>
          所有图层:
          <LayerIcons>
            <PanelIcon name="eye" size={10} color="#222" />
            <PanelIcon name="lock" size={9} color="#222" />
          </LayerIcons>
        </LayerBox>
        <Rule $gap={1} />
        <LayerHistory>
          <PanelIcon name="redo" size={9} color="#b5b5b5" />
          <PanelIcon name="undo" size={9} color="#b5b5b5" />
        </LayerHistory>
      </ToolBar>

      <InfoBox>
        <InfoLabel>主要的:</InfoLabel>
        <InfoButtons>
          <InfoButton aria-label="view"><Icon name="viewBox" size={12} color="#333" /><Caret $dir="right" /></InfoButton>
          <InfoButton aria-label="marquee"><Icon name="marqueeArrow" size={11} color="#333" /><Caret $dir="right" /></InfoButton>
          <InfoButton $blue aria-label="rotate"><Icon name="rotate" size={11} /></InfoButton>
          <InfoButton $tall aria-label="arrow"><Icon name="arrow" size={11} /><Caret $dir="right" /></InfoButton>
        </InfoButtons>
      </InfoBox>

      <Body>
        <Toolbox>
          <Grip />
          <PickTool aria-label="arrow"><Icon name="arrow" size={13} /></PickTool>
          <MarqueeTool aria-label="marquee"><Icon name="marquee" size={14} color="#333" /></MarqueeTool>
          <ToolHeader>设计</ToolHeader>
          <ToolGrid $h={329}>
            {designTools.map((t) => <button key={t} aria-label={t}><Icon name={t} size={15} color="#505050" /></button>)}
          </ToolGrid>
          <ToolHeader>文档</ToolHeader>
          <ToolHeader>更多</ToolHeader>
          <ToolGrid>
            {moreTools.map((t, i) => <button key={t} aria-label={t}><Icon name={t} size={15} color={i > 3 ? "#909090" : "#505050"} /></button>)}
          </ToolGrid>
        </Toolbox>

        <Panel>
          <Grip $w={43} />
          <StatusLine>
            <Icon name="circle" size={11} color="#d2d2d2" />
            <span>离线</span>
            <PanelIcon name="play" size={9} />
          </StatusLine>
          <PanelHeader><Caret />工作空间</PanelHeader>
          <SplitField icon="exchange" text="发送&接收" mt={5} />
          <Divider />
          <SplitField icon="down" text="保留" mt={5} />
          <SplitField icon="up" text="释放" mt={4} />
          <Divider />
          <FieldLabel htmlFor="colors">彩色工作空间:</FieldLabel>
          <Field $mt={6}>
            <Icon name="discFaded" size={11} />
            <SelectWrap>
              <select id="colors"><option>全部用原始颜色</option></select>
              <Caret $color="#888" />
            </SelectWrap>
          </Field>
          <WideButton>我的工作空间</WideButton>
          <PanelHeader><Caret />用户</PanelHeader>
          <ListHead $pad={22}><Icon name="disc" size={11} />名称</ListHead>
          <ListArea>
            <Caret $dir="up" $color="#888" />
            <Caret $color="#888" />
          </ListArea>
          <IconRow $h={26}>
            <Boxed aria-label="leave"><Icon name="personX" size={12} color="#c0c0c0" /></Boxed>
            <PanelIcon name="mailUp" />
            <PanelIcon name="discFaded" size={11} />
            <PanelIcon name="person" />
          </IconRow>
          <PanelHeader><Caret />消息</PanelHeader>
          <MessageTools>
            <PanelIcon name="mail" />
            <PanelIcon name="person" />
            <PanelIcon name="mail" />
          </MessageTools>
          <ListHead $pad={7}>
            <MessageCol>从</MessageCol>
            当...时
            <Caret $color="#888" />
          </ListHead>
          <ListArea>
            <Caret $dir="up" $color="#888" />
            <Caret $color="#888" />
          </ListArea>
          <IconRow $h={25}>
            <PanelIcon name="mailUp" />
            <PanelIcon name="mail" />
            <PanelIcon name="mail" />
          </IconRow>
        </Panel>

        <Centre>
          <TabBar>
            <Tab $grow={193}><Icon name="tabs" size={13} /><Icon name="floor" size={14} />[2. 楼层]</Tab>
            <Tab $grow={173}><Icon name="centre" size={13} />[操作中心]</Tab>
            <Tab $grow={176} $active><Icon name="view3d" size={13} />[3D / 全部]<b>×</b></Tab>
            <Tab $grow={176}><Icon name="house" size={13} />[南向立面图]</Tab>
            <TabMenu aria-label="tabs"><Icon name="city" size={17} color={B} /><Caret /></TabMenu>
          </TabBar>
          <Viewport>
            <Building />
            <EdgeGrip $side="top" />
            <EdgeGrip $side="bottom" />
            <EdgeGrip $side="left" />
            <EdgeGrip $side="right" />
          </Viewport>
          <QuickBar>
            <QuickTools $w={46}>
              <PanelIcon name="zoomBack" size={11} color="#333" />
              <PanelIcon name="zoomNext" size={11} color="#bbb" />
              <PanelIcon name="zoomIn" size={11} color="#333" />
            </QuickTools>
            <QuickTools $w={33}>
              <PanelIcon name="orbit" size={10} color="#444" />
              <PanelIcon name="walk" size={9} color="#444" />
            </QuickTools>
            {quick.map((q, i) => (
              <QuickOption key={i} $dim={q.dim}>
                <Icon name={q.icon} size={11} color={i === 1 ? "#aaa" : "#333"} />
                <em>{q.text}</em>
                <Caret $dir="right" $color={q.dim ? "#999" : "#222"} />
              </QuickOption>
            ))}
          </QuickBar>
        </Centre>

        <RightPanel>
          <Grip $w={45} />
          <RefRow>
            <RefButton $w={18} aria-label="trace"><Icon name="frame" size={11} color="#b5c0cc" /></RefButton>
            <RefButton>
              <Icon name="down2" size={11} color="#aaa" />
              <em>在当前楼层下</em>
              <Caret $dir="right" $color="#888" />
            </RefButton>
          </RefRow>
          <RefTools $pad={4} $h={23}>
            <PanelIcon name="link" />
            <PanelIcon name="addSq" />
            <PanelIcon name="addHex" color="#9fb3ca" />
            <PanelIcon name="swap" color="#9fb3ca" />
            <PanelIcon name="cycle" />
          </RefTools>
          <RefLine />
          <SliderLine id="reference" label="参照 :" />
          <SliderLine id="active" label="活动 :" round />
          <Spacer />
          <RefLine />
          <RefTools $pad={24} $h={24}>
            <PanelIcon name="hand" />
            <PanelIcon name="swap" color="#9fb3ca" />
            <PanelIcon name="mirror" />
            <PanelIcon name="stamp" />
          </RefTools>
          <Grip $w={45} />
          <NavRow>
            <NavButton $wide aria-label="project"><Icon name="project" size={13} color="#333" /><Caret $dir="right" /></NavButton>
            <NavButton aria-label="map"><Icon name="homes" size={13} color="#444" /></NavButton>
            <NavButton $active aria-label="views"><Icon name="floor" size={14} color="#333" /></NavButton>
            <NavButton aria-label="layouts"><Icon name="sheets" size={13} color="#444" /></NavButton>
            <NavButton aria-label="publisher"><Icon name="book" size={13} color="#444" /></NavButton>
          </NavRow>
          <TreeBox>
            <Tree>
              {tree.map((n, i) => (
                <TreeItem key={i} $level={n.level}>
                  <Twist $show={n.open} />
                  <Icon name={n.icon} size={13} color={B} />
                  {n.text}
                </TreeItem>
              ))}
            </Tree>
            <ScrollTrack>
              <Caret $dir="up" $color="#555" />
              <ScrollThumb />
              <Caret $color="#555" />
            </ScrollTrack>
          </TreeBox>
          <IconRow $h={27} $end={2}>
            <PanelIcon name="copyDoc" color="#a3bcd8" />
            <PanelIcon name="addView" size={13} color="#444" />
            <PanelIcon name="addFolder" size={13} color="#444" />
            <PanelIcon name="openView" size={13} />
            <PanelIcon name="cross" size={11} color="#eba79c" />
          </IconRow>
          <PanelHeader><Caret />属性</PanelHeader>
          <Empty>无选择。</Empty>
        </RightPanel>
      </Body>

      <StatusBar>
        <span>点击一个元素或划取一个选择区。按住Ctrl+Shift 在元素和子元素切换选择。</span>
        <Account><Icon name="windows" size={11} color="#333" />GRAPHISOFT ID</Account>
      </StatusBar>
    </Shell>
  );
}
